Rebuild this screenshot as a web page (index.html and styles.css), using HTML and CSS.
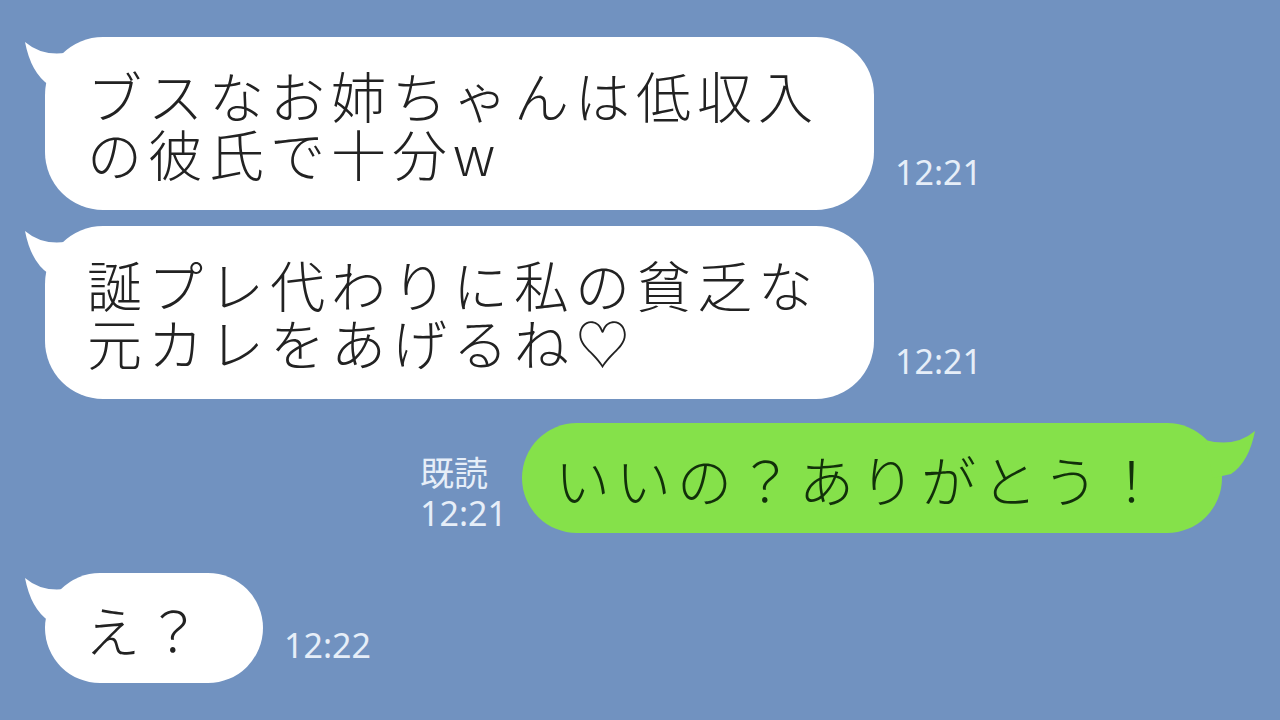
FILE: index.html
```html
<!DOCTYPE html>
<html lang="ja">
<head>
  <meta charset="UTF-8" />
  <title>トーク</title>
  <link rel="stylesheet" href="styles.css">
</head>
<body>

  <main class="chat">

    <div class="row">
      <div class="bubble">
        <svg class="tail" viewBox="0 0 60 60" width="60" height="60"><path d="M2,5 Q22,22 52,14 L44,52 L26,48 Q8,36 2,5 Z" /></svg>
        <p>ブスなお姉ちゃんは低収入<br>の彼氏で十分w</p>
      </div>
      <span class="time">12:21</span>
    </div>

    <div class="row">
      <div class="bubble">
        <svg class="tail" viewBox="0 0 60 60" width="60" height="60"><path d="M2,5 Q22,22 52,14 L44,52 L26,48 Q8,36 2,5 Z" /></svg>
        <p>誕プレ代わりに私の貧乏な<br>元カレをあげるね♡</p>
      </div>
      <span class="time">12:21</span>
    </div>

    <div class="row mine">
      <span class="read">既読<br>12:21</span>
      <div class="bubble green">
        <svg class="tail" viewBox="0 0 60 60" width="60" height="60"><path d="M2,5 Q22,22 52,14 L44,52 L26,48 Q8,36 2,5 Z" /></svg>
        <p>いいの？ありがとう！</p>
      </div>
    </div>

    <div class="row last">
      <div class="bubble">
        <svg class="tail" viewBox="0 0 60 60" width="60" height="60"><path d="M2,5 Q22,22 52,14 L44,52 L26,48 Q8,36 2,5 Z" /></svg>
        <p>え？</p>
      </div>
      <span class="time">12:22</span>
    </div>

  </main>

</body>
</html>
```

FILE: styles.css
```css
body {
  margin: 0;
  background: #7192c0;
  font-family: "Noto Sans CJK JP", "Noto Sans", sans-serif;
  color: #222;
}

.chat {
  width: 1280px;
  height: 720px;
  box-sizing: border-box;
  padding: 37px 58px 0 45px;
  display: flex;
  flex-direction: column;
  gap: 16px;
}

.row {
  display: flex;
  align-items: flex-end;
  gap: 21px;
}

.row.mine {
  justify-content: flex-end;
  gap: 15px;
  margin-top: 8px;
}

.row.last {
  margin-top: 24px;
}

.bubble {
  position: relative;
  background: #fff;
  border-radius: 58px;
  padding: 28px 55px 29px 42px;
}

.bubble p {
  margin: 0;
  font-size: 55px;
  font-weight: 300;
  line-height: 58px;
  letter-spacing: 6px;
  white-space: nowrap;
}

.bubble .tail {
  position: absolute;
  left: -22px;
  top: 0;
  fill: #fff;
}

.bubble.green {
  background: #85e14a;
  padding: 26px 57px 26px 33px;
}

.bubble.green p {
  color: #12300a;
}

.bubble.green .tail {
  left: auto;
  right: -35px;
  top: 3px;
  fill: #85e14a;
  transform: scaleX(-1);
}

.row.last .bubble {
  padding: 26px 56px 26px 40px;
}

.time {
  font-family: "Noto Sans", sans-serif;
  font-size: 34px;
  line-height: 40px;
  color: #e6eef8;
  margin-bottom: 18px;
}

.read {
  font-family: "Noto Sans", "Noto Sans CJK JP", sans-serif;
  font-size: 34px;
  line-height: 40px;
  color: #e6eef8;
}
```
